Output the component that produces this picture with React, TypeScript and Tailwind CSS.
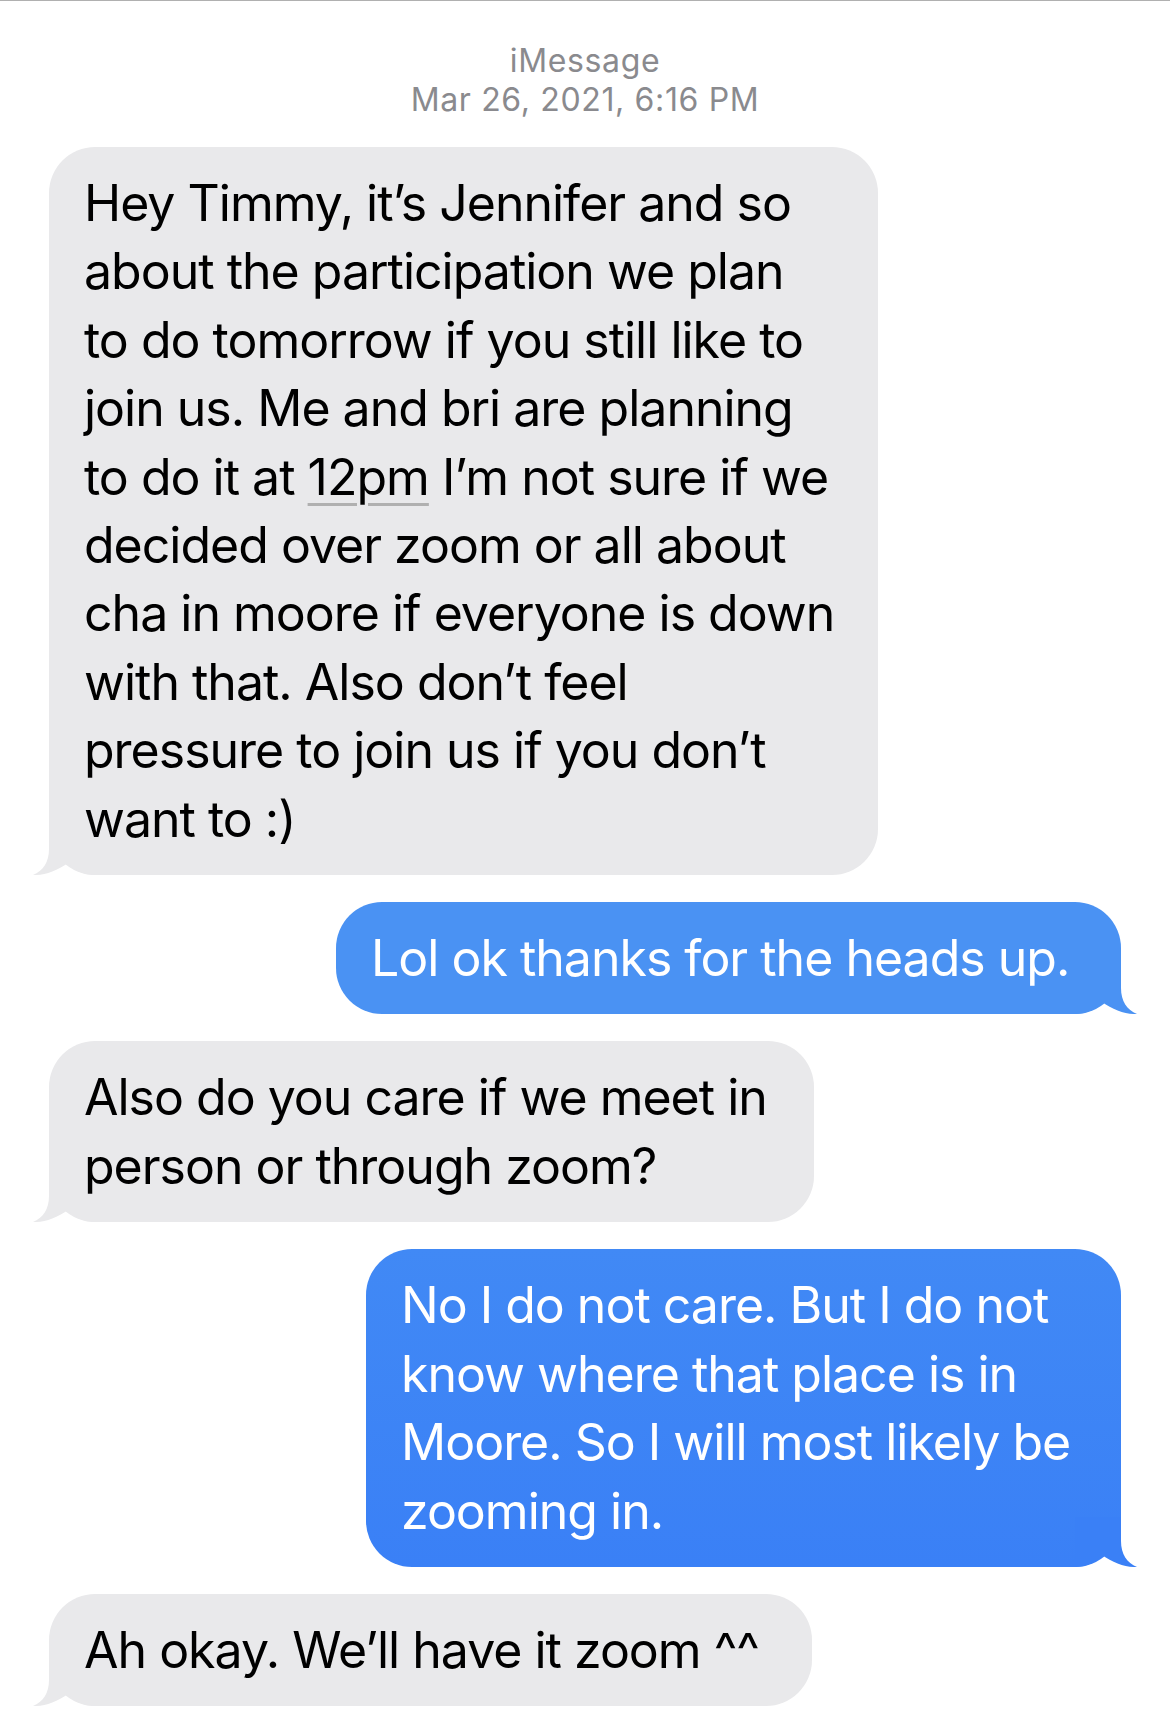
import type { ReactNode } from 'react'

type Side = 'in' | 'out'

function Tail({ side, color }: { side: Side; color: string }) {
  return (
    <svg
      viewBox="0 0 62 50"
      className={
        side === 'in'
          ? 'absolute bottom-0 left-[-16px] h-[50px] w-[62px]'
          : 'absolute bottom-0 right-[-16px] h-[50px] w-[62px] -scale-x-100'
      }
    >
      <path d="M16,0 L16,24 C16,37 10,46 0,50 C11,50.5 24,46 35,38 C43,46 51,50 62,50 L62,0 Z" fill={color} />
    </svg>
  )
}

function Bubble({
  side,
  width,
  lines,
  bg,
  tail,
}: {
  side: Side
  width: string
  lines: ReactNode[]
  bg: string
  tail: string
}) {
  return (
    <div className={side === 'in' ? 'flex justify-start' : 'flex justify-end'}>
      <div className={`relative rounded-[46px] px-[35px] py-[22px] ${width} ${bg}`}>
        <Tail side={side} color={tail} />
        <div
          className={`relative whitespace-nowrap text-[50px] leading-[68.4px] tracking-[-0.02em] ${
            side === 'in' ? 'text-black' : 'text-white'
          }`}
        >
          {lines.map((line, i) => (
            <div key={i}>{line}</div>
          ))}
        </div>
      </div>
    </div>
  )
}

export default function App() {
  return (
    <div className="min-h-[1736px] w-[1170px] border-t border-[#b0b0b0] bg-white font-[Inter,'Noto_Sans',sans-serif]">
      <div className="flex flex-col items-center pt-[40px] text-[32px] leading-[39px] tracking-[0.02em] text-[#8a8a8e]">
        <span>iMessage</span>
        <span>Mar 26, 2021, 6:16 PM</span>
      </div>

      <div className="mt-[28px] flex flex-col gap-[27px] px-[49px]">
        <Bubble
          side="in"
          width="w-[829px]"
          bg="bg-[#e9e9eb]"
          tail="#e9e9eb"
          lines={[
            'Hey Timmy, it’s Jennifer and so',
            'about the participation we plan',
            'to do tomorrow if you still like to',
            'join us. Me and bri are planning',
            <>
              to do it at{' '}
              <span className="underline decoration-[#b0b0b0] decoration-[3px] underline-offset-[8px]">12pm</span>{' '}
              I’m not sure if we
            </>,
            'decided over zoom or all about',
            'cha in moore if everyone is down',
            'with that. Also don’t feel',
            'pressure to join us if you don’t',
            'want to :)',
          ]}
        />

        <Bubble
          side="out"
          width="w-[785px]"
          bg="bg-[#4a92f3]"
          tail="#4a92f3"
          lines={['Lol ok thanks for the heads up.']}
        />

        <Bubble
          side="in"
          width="w-[765px]"
          bg="bg-[#e9e9eb]"
          tail="#e9e9eb"
          lines={['Also do you care if we meet in', 'person or through zoom?']}
        />

        <Bubble
          side="out"
          width="w-[755px]"
          bg="bg-linear-to-b from-[#4189f5] to-[#3a80f6]"
          tail="#3a80f6"
          lines={[
            'No I do not care. But I do not',
            'know where that place is in',
            'Moore. So I will most likely be',
            'zooming in.',
          ]}
        />

        <Bubble
          side="in"
          width="w-[763px]"
          bg="bg-[#e9e9eb]"
          tail="#e9e9eb"
          lines={['Ah okay. We’ll have it zoom ^^']}
        />
      </div>
    </div>
  )
}
